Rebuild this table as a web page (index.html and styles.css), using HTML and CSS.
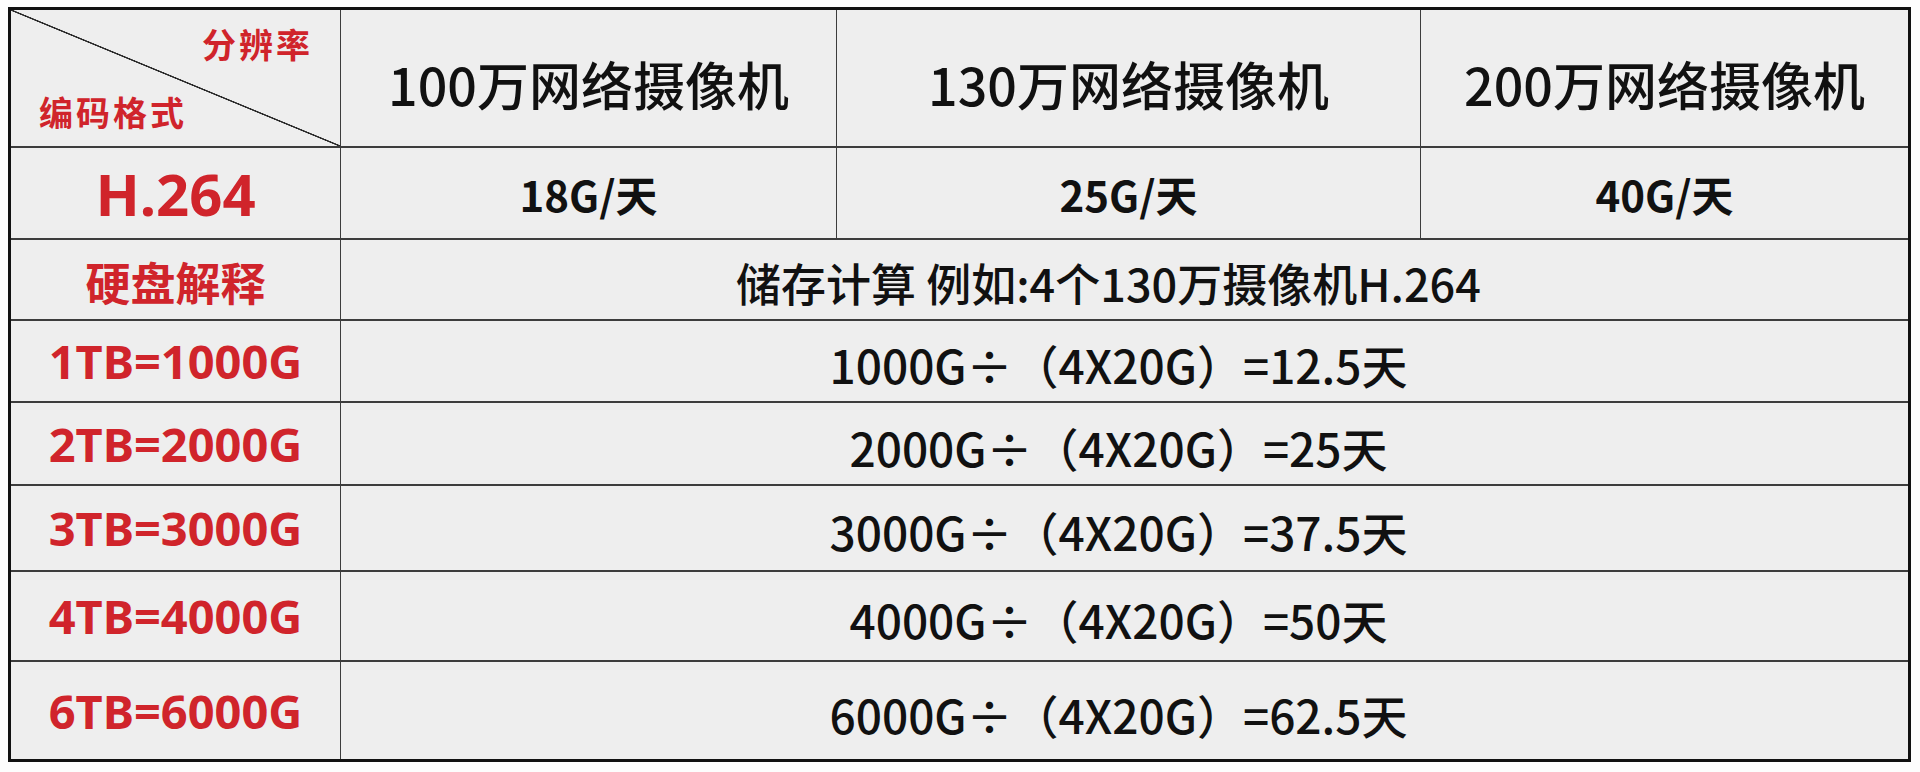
FILE: index.html
```html
<!DOCTYPE html>
<html lang="zh-CN">
<head>
<meta charset="utf-8">
<title>存储计算</title>
<link rel="stylesheet" href="styles.css">
</head>
<body>
<div class="sheet">
  <div class="cell corner">
    <span class="corner-top">分辨率</span>
    <span class="corner-bottom">编码格式</span>
  </div>
  <div class="cell head">100万网络摄像机</div>
  <div class="cell head">130万网络摄像机</div>
  <div class="cell head">200万网络摄像机</div>

  <div class="cell red codec">H.264</div>
  <div class="cell rate">18G/天</div>
  <div class="cell rate">25G/天</div>
  <div class="cell rate">40G/天</div>

  <div class="cell red label">硬盘解释</div>
  <div class="cell span note">储存计算 例如:4个130万摄像机H.264</div>

  <div class="cell red tb">1TB=1000G</div>
  <div class="cell span calc">1000G÷（4X20G）=12.5天</div>

  <div class="cell red tb">2TB=2000G</div>
  <div class="cell span calc">2000G÷（4X20G）=25天</div>

  <div class="cell red tb">3TB=3000G</div>
  <div class="cell span calc">3000G÷（4X20G）=37.5天</div>

  <div class="cell red tb">4TB=4000G</div>
  <div class="cell span calc">4000G÷（4X20G）=50天</div>

  <div class="cell red tb">6TB=6000G</div>
  <div class="cell span calc">6000G÷（4X20G）=62.5天</div>
</div>
</body>
</html>
```
FILE: styles.css
```css
html, body {
  margin: 0;
  padding: 0;
  background: #fdfdfd;
}

body {
  font-family: "Noto Sans CJK SC", "Noto Sans", sans-serif;
  color: #111111;
}

.sheet {
  margin: 7px 0 0 8px;
  width: 1897px;
  display: grid;
  grid-template-columns: 329px 495px 583px 487px;
  grid-template-rows: 136px 90px 79px 80px 81px 84px 88px 97px;
  column-gap: 1px;
  row-gap: 2px;
  background: #3c3c3c;
  border: 3px solid #111;
}

.cell {
  background: #eeeeee;
  display: flex;
  align-items: center;
  justify-content: center;
  white-space: nowrap;
}

.span {
  grid-column: 2 / 5;
}

.corner {
  flex-direction: column;
  align-items: stretch;
  justify-content: space-between;
  padding: 14px 30px 14px 28px;
  background:
    linear-gradient(to top right, transparent calc(50% - 1px), #2a2a2a calc(50% - 0.5px), #2a2a2a calc(50% + 0.5px), transparent calc(50% + 1px)),
    #eeeeee;
}

.corner-top,
.corner-bottom {
  color: #d0242b;
  font-weight: 700;
  font-size: 34px;
  letter-spacing: 3px;
  line-height: 40px;
}

.corner-top {
  text-align: right;
  margin-right: -3px;
}

.corner-bottom {
  text-align: left;
}

.head {
  font-size: 52px;
  font-weight: 500;
  padding-top: 10px;
}

.red {
  color: #d0242b;
  font-weight: 700;
}

.codec {
  font-family: "Noto Sans", "Noto Sans CJK SC", sans-serif;
  font-size: 58px;
}

.rate {
  font-size: 42px;
  font-weight: 700;
}

.label {
  font-size: 45px;
  padding-top: 4px;
}

.tb {
  font-family: "Noto Sans", "Noto Sans CJK SC", sans-serif;
  font-size: 47px;
}

.note {
  font-size: 45px;
  font-weight: 500;
  padding: 6px 32px 0 0;
}

.calc {
  font-size: 46px;
  font-weight: 500;
  padding: 6px 12px 0 0;
}
```
